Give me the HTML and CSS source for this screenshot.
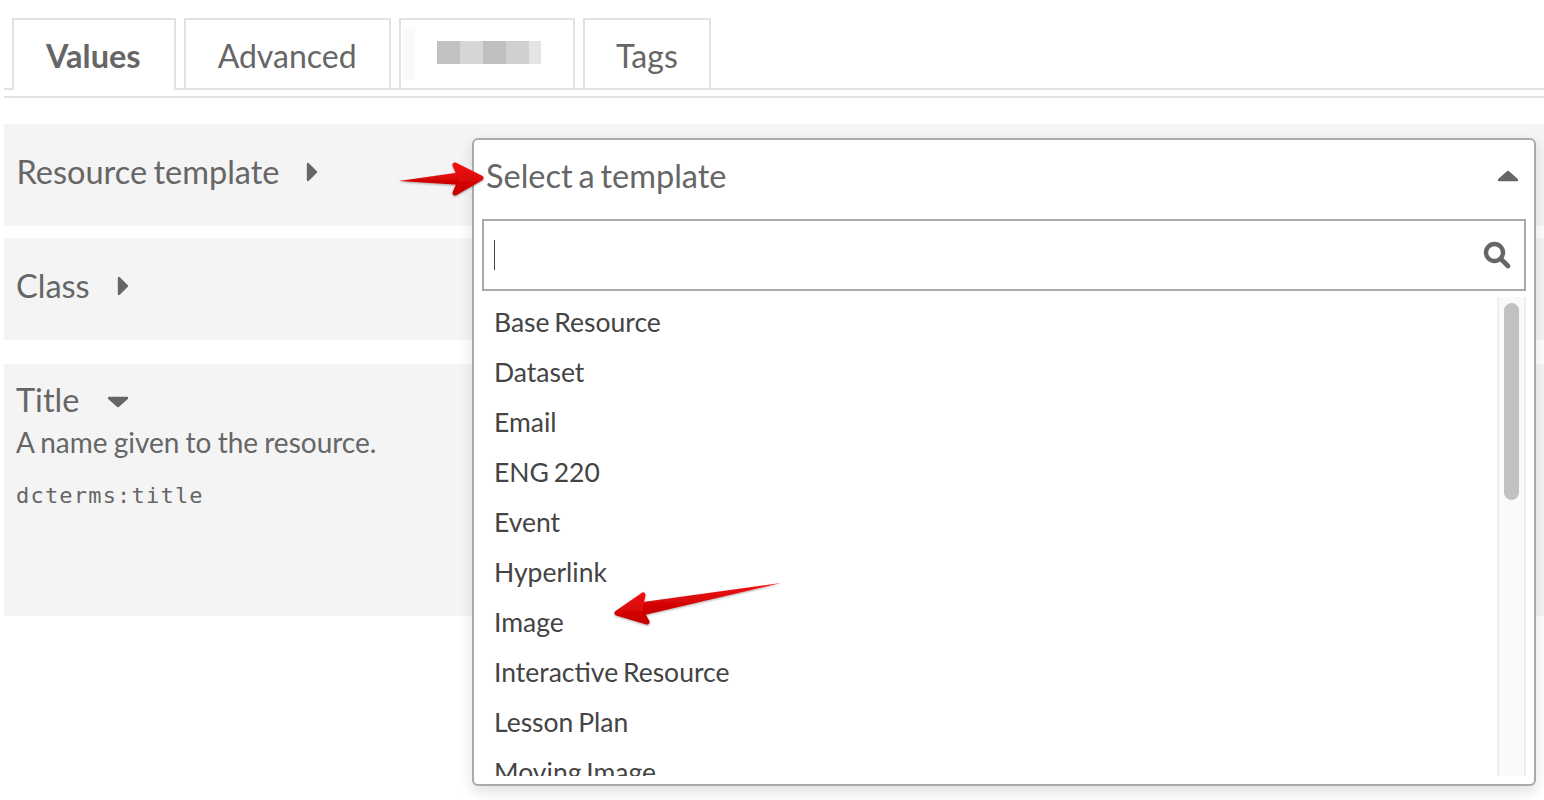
FILE: index.html
```html
<!DOCTYPE html>
<html lang="en">
<head>
    <meta charset="UTF-8">
    <meta name="viewport" content="width=device-width, initial-scale=1.0">
    <title>Values</title>
    <link rel="stylesheet" href="styles.css">
</head>
<body>
    <nav class="tabs">
        <a href="#" class="tab active">Values</a>
        <a href="#" class="tab">Advanced</a>
        <a href="#" class="tab tab-hidden">
            <span class="blur-text">
                <i class="b1"></i><i class="b2"></i><i class="b3"></i><i class="b4"></i><i class="b5"></i>
            </span>
        </a>
        <a href="#" class="tab tab-tags">Tags</a>
    </nav>

    <main class="form">
        <div class="field field-template">
            <span class="field-label">Resource template</span>
            <svg class="caret caret-right" viewBox="0 0 12 20" width="12" height="20"><path d="M2 2L10 10L2 18Z"/></svg>
        </div>
        <div class="field field-class">
            <span class="field-label">Class</span>
            <svg class="caret caret-right" viewBox="0 0 12 20" width="12" height="20"><path d="M2 2L10 10L2 18Z"/></svg>
        </div>
        <div class="field field-title">
            <div class="title-line">
                <span class="field-label">Title</span>
                <svg class="caret caret-down" viewBox="0 0 22 12" width="22" height="12"><path d="M2 2H20L11 10Z"/></svg>
            </div>
            <p class="field-desc">A name given to the resource.</p>
            <code class="field-term">dcterms:title</code>
        </div>

        <!-- open dropdown sits on top of the rows -->
        <div class="dropdown">
            <div class="dropdown-head">
                <span>Select a template</span>
                <svg class="caret caret-up" viewBox="0 0 22 12" width="22" height="12"><path d="M2 10H20L11 2Z"/></svg>
            </div>
            <div class="search">
                <span class="search-cursor"></span>
                <svg class="search-icon" viewBox="0 0 28 28" width="28" height="28">
                    <circle cx="11.5" cy="11.5" r="8.5" fill="none" stroke="#666" stroke-width="4.4"/>
                    <path d="M18 18L25 25" stroke="#666" stroke-width="4.6" stroke-linecap="round"/>
                </svg>
            </div>
            <div class="list-wrap">
                <ul class="list">
                    <li>Base Resource</li>
                    <li>Dataset</li>
                    <li>Email</li>
                    <li>ENG 220</li>
                    <li>Event</li>
                    <li>Hyperlink</li>
                    <li>Image</li>
                    <li>Interactive Resource</li>
                    <li>Lesson Plan</li>
                    <li>Moving Image</li>
                </ul>
                <div class="scrollbar"><div class="thumb"></div></div>
            </div>
        </div>
    </main>

    <!-- red annotation arrows -->
    <svg class="arrows" width="1544" height="800" viewBox="0 0 1544 800">
        <defs>
            <linearGradient id="redGrad" x1="0" y1="0" x2="0" y2="1">
                <stop offset="0" stop-color="#f01010"/>
                <stop offset="1" stop-color="#c40000"/>
            </linearGradient>
            <filter id="arrowShadow" x="-10%" y="-30%" width="120%" height="170%">
                <feDropShadow dx="0" dy="1" stdDeviation="1" flood-color="#000" flood-opacity="0.35"/>
            </filter>
        </defs>
        <g filter="url(#arrowShadow)">
            <path class="shaft" d="M399 181L462 172L462 185Z"/>
            <path class="head" d="M455 165L481 178L455 193L461 179Z"/>
            <path class="shaft" d="M781 583L636 603L640 616Z"/>
            <path class="head" d="M617 613L643 595L640 609L647 622Z"/>
        </g>
    </svg>
</body>
</html>
```

FILE: styles.css
```css
body {
    font-family: 'Lato', sans-serif;
    margin: 0;
    padding: 18px 0 0 4px;
    background-color: #fff;
    color: #666;
    height: 782px;
    overflow: hidden;
}
.tabs {
    display: flex;
    gap: 8px;
    height: 70px;
    padding-left: 8px;
    border-bottom: 2px solid #e2e2e2;
    box-shadow: 0 6px 0 0 #fff, 0 8px 0 0 #e2e2e2;
}
.tab {
    box-sizing: border-box;
    height: 70px;
    padding: 0 32px;
    border: 2px solid #e2e2e2;
    border-bottom: 0;
    color: #666;
    font-size: 32px;
    line-height: 72px;
    text-decoration: none;
}
.tab.active {
    height: 72px;
    padding: 0 33px 0 32px;
    background: #fff;
    font-size: 32.5px;
    font-weight: bold;
}
.tab-hidden {
    width: 176px;
    padding: 0;
    background: linear-gradient(#fafafa, #fafafa) 2px 8px / 12px 52px no-repeat;
}
.tab-tags {
    padding: 0 31.5px;
}
.blur-text {
    display: flex;
    margin: 21px 0 0 36px;
}
.blur-text i {
    display: block;
    width: 23px;
    height: 23px;
}
.blur-text .b1 { background: #c2c2c2; }
.blur-text .b2 { background: #d6d6d6; }
.blur-text .b3 { background: #bfbfbf; }
.blur-text .b4 { background: #d0d0d0; }
.blur-text .b5 { background: #e4e4e4; width: 12px; }

.form {
    position: relative;
    margin-top: 34px;
}
.field {
    box-sizing: border-box;
    background: #f4f4f4;
    padding: 0 12.5px;
    margin-bottom: 12px;
    height: 102px;
    display: flex;
    align-items: flex-start;
}
.field-label {
    font-size: 32.5px;
    line-height: 40px;
    word-spacing: -2px;
    color: #666;
}
.field-template {
    padding-top: 28px;
}
.field-class {
    padding-top: 28px;
    padding-left: 12px;
    margin-bottom: 24px;
}
.field-title {
    display: block;
    height: 252px;
    padding: 16px 12px 0;
}
.title-line {
    display: flex;
    align-items: flex-start;
}
.field-desc {
    margin: 4px 0 0;
    font-size: 28px;
    line-height: 36px;
    word-spacing: -1px;
}
.field-term {
    display: block;
    margin-top: 20px;
    font-family: 'DejaVu Sans Mono', monospace;
    font-size: 22px;
    line-height: 32px;
    letter-spacing: 1.2px;
    color: #666;
}

.caret {
    display: block;
    fill: #666;
    stroke: #666;
    stroke-width: 2.4;
    stroke-linejoin: round;
}
.caret-right {
    margin: 10px 0 0 27px;
}
.caret-down {
    margin: 16px 0 0 28px;
}
.caret-up {
    margin-top: 2px;
}

.dropdown {
    position: absolute;
    left: 468px;
    top: 14px;
    box-sizing: border-box;
    width: 1064px;
    height: 648px;
    background: #fff;
    border: 2px solid #aaa;
    border-radius: 6px;
    box-shadow: 0 6px 14px rgba(0, 0, 0, 0.12);
}
.dropdown-head {
    box-sizing: border-box;
    display: flex;
    justify-content: space-between;
    align-items: center;
    height: 74px;
    padding: 0 15px 4px 12px;
    font-size: 32.5px;
    word-spacing: -2.5px;
    color: #666;
}
.search {
    box-sizing: border-box;
    position: relative;
    height: 72px;
    margin: 5px 8px 0 8px;
    border: 2px solid #aaa;
    display: flex;
    align-items: center;
    justify-content: space-between;
    padding: 0 13px 0 10px;
}
.search-cursor {
    display: block;
    width: 1px;
    height: 30px;
    background: #444;
}
.list-wrap {
    display: flex;
    justify-content: space-between;
    height: 479px;
    margin: 6px 8px 0 20px;
    overflow: hidden;
}
.list {
    list-style: none;
    margin: 0;
    padding: 0;
    font-size: 26.5px;
    word-spacing: -2px;
    color: #444;
}
.list li {
    height: 50px;
    line-height: 50px;
}
.scrollbar {
    box-sizing: border-box;
    width: 29px;
    height: 479px;
    padding: 6px 6px 0 5px;
    background: #fafafa;
    border-left: 2px solid #eee;
    border-right: 2px solid #eee;
}
.thumb {
    width: 15px;
    height: 197px;
    background: #c1c1c1;
    border-radius: 8px;
}
.arrows {
    position: absolute;
    left: 0;
    top: 0;
    pointer-events: none;
}
.shaft {
    fill: url(#redGrad);
}
.head {
    fill: url(#redGrad);
    stroke: url(#redGrad);
    stroke-width: 5;
    stroke-linejoin: round;
}
```
